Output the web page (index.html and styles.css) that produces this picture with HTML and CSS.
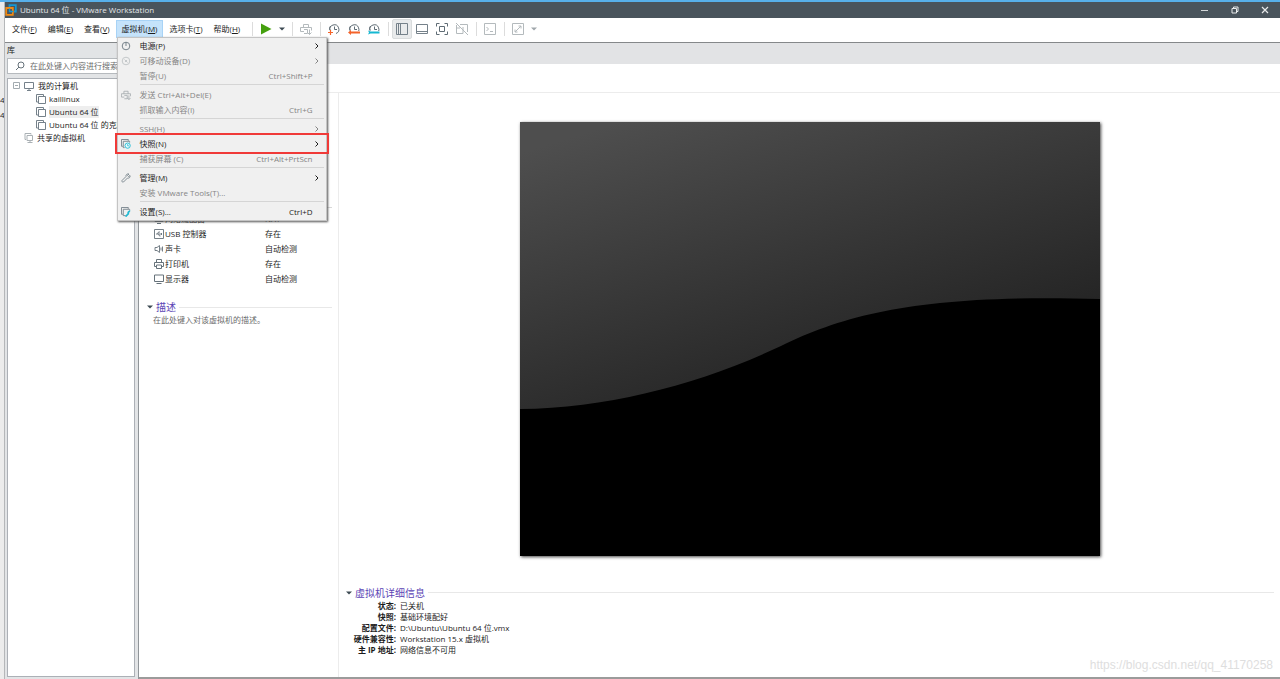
FILE: index.html
```html
<!DOCTYPE html>
<html lang="zh-CN">
<head>
<meta charset="utf-8">
<title>Ubuntu 64 位 - VMware Workstation</title>
<link rel="stylesheet" href="styles.css">
</head>
<body>
<svg class="defs" aria-hidden="true">
  <symbol id="vm" viewBox="0 0 10 10"><path d="M2.500 8H.5V.5H7.500V2.500M2.500 2.500h7v7h-7z" fill="none" stroke="#75818a"/></symbol>
  <symbol id="arrow" viewBox="0 0 6 8"><path d="M1.500 1.500 4 4 1.500 6.500" fill="none" stroke="currentColor"/></symbol>
  <symbol id="caret" viewBox="0 0 6 4"><path d="M0 .5h6L3 3.500z" fill="currentColor"/></symbol>
  <symbol id="send" viewBox="0 0 12 12"><path d="M3.500 4.500V1.500h5v3M4 8.500H.5v-4h11v3M4 6.500h3.500v4H4M9.500 6.500v5M7.500 9.500l2 2 2-2" fill="none" stroke="currentColor"/></symbol>
  <symbol id="clock" viewBox="0 0 12 12"><path d="M2 7.500A4.500 4.500 0 1 1 8 10.500M2 7.500A4.500 4.500 0 0 1 2.500 3M6.500 3.500V6.500H9" fill="none" stroke="#5f6c75"/></symbol>
</svg>
<div class="desktop">
  <aside class="behind" aria-hidden="true"><span>4</span><span>4</span></aside>
  <div class="window">
    <header class="titlebar">
      <svg class="logo" viewBox="0 0 12 12"><path d="M4.500 3V1.200h6.300v6.300H9" fill="none" stroke="#1598d4" stroke-width="1.800"/><path d="M1.200 4h6.600v6.800H1.200z" fill="none" stroke="#f08a13" stroke-width="1.800"/><path d="M4.500 4.500V7.500H8" fill="none" stroke="#1598d4" stroke-width="1.400"/></svg>
      <h1>Ubuntu 64 位 - VMware Workstation</h1>
      <div class="controls">
        <button aria-label="最小化"><svg viewBox="0 0 8 8"><path d="M0 4.500h7" stroke="#d4d8da"/></svg></button>
        <button aria-label="还原"><svg viewBox="0 0 8 8"><path d="M1 2.500h4.500V7H1zM2.500 2.500V1H7v4.500H5.500" fill="none" stroke="#e8eaeb"/></svg></button>
        <button aria-label="关闭"><svg viewBox="0 0 8 8"><path d="M1 1l6 6M7 1 1 7" stroke="#e8eaeb" stroke-width="1.200"/></svg></button>
      </div>
    </header>
    <nav class="menubar">
      <button class="item">文件(<u>F</u>)</button>
      <button class="item">编辑(<u>E</u>)</button>
      <button class="item">查看(<u>V</u>)</button>
      <div class="anchor">
        <button class="item open">虚拟机(<u>M</u>)</button>
        <div class="menu">
          <button><svg viewBox="0 0 10 10"><circle cx="5" cy="5" r="3.800" fill="none" stroke="#77838b"/><path d="M5 1v4" stroke="#77838b"/></svg><span>电源(P)</span><svg class="arr"><use href="#arrow"/></svg></button>
          <button disabled><svg viewBox="0 0 10 10"><circle cx="5" cy="5" r="3.800" fill="none" stroke="#c4c8ca"/><path d="M3.500 3.500l3 3M4 6l2-2" stroke="#c4c8ca"/></svg><span>可移动设备(D)</span><svg class="arr"><use href="#arrow"/></svg></button>
          <button disabled><i></i><span>暂停(U)</span><kbd>Ctrl+Shift+P</kbd></button>
          <hr>
          <button disabled><svg class="pale"><use href="#send"/></svg><span>发送 Ctrl+Alt+Del(E)</span></button>
          <button disabled><i></i><span>抓取输入内容(I)</span><kbd>Ctrl+G</kbd></button>
          <hr>
          <button disabled><i></i><span>SSH(H)</span><svg class="arr"><use href="#arrow"/></svg></button>
          <button class="marked"><svg viewBox="0 0 11 11"><path d="M2 8H.5V.5H8V2M4 9.500H2.500v-7h7V4" fill="none" stroke="#75818a"/><circle cx="7.300" cy="7.300" r="2.900" fill="#e6fafd" stroke="#22b9d3"/><path d="M7.300 5.500v2H9" fill="none" stroke="#22b9d3" stroke-width=".8"/></svg><span>快照(N)</span><svg class="arr"><use href="#arrow"/></svg></button>
          <button disabled><i></i><span>捕获屏幕 (C)</span><kbd>Ctrl+Alt+PrtScn</kbd></button>
          <hr>
          <button><svg viewBox="0 0 10 10"><path d="M1 7.500 5 3.500C4.500 1.500 6.500.5 8 1L6.500 2.500l1 1L9 2.500C9.500 4.500 8 5.500 6.500 5L2.500 9C1.500 9.500.5 8.500 1 7.500z" fill="none" stroke="#77838b" stroke-width=".9"/></svg><span>管理(M)</span><svg class="arr"><use href="#arrow"/></svg></button>
          <button disabled><i></i><span>安装 VMware Tools(T)...</span></button>
          <hr>
          <button><svg viewBox="0 0 11 11"><path d="M2 8H.5V.5H8V2M5 9.500H2.500v-7h7V4" fill="none" stroke="#75818a"/><path d="M5 10.500 8 7.500c-.5-2 1-3 2-2.500" fill="none" stroke="#22b9d3" stroke-width="2"/></svg><span>设置(S)...</span><kbd>Ctrl+D</kbd></button>
        </div>
      </div>
      <button class="item">选项卡(<u>T</u>)</button>
      <button class="item">帮助(<u>H</u>)</button>
      <div class="tools">
        <span class="sep"></span>
        <button aria-label="启动"><svg viewBox="0 0 12 12"><path d="M1 .5 11.500 6 1 11.500z" fill="#45a00f"/></svg></button>
        <button class="drop" aria-label="电源选项"><svg class="car"><use href="#caret"/></svg></button>
        <span class="sep"></span>
        <button class="pale" aria-label="发送按键"><svg><use href="#send"/></svg></button>
        <span class="sep"></span>
        <button aria-label="拍摄快照"><svg viewBox="0 0 12 12"><use href="#clock"/><path d="M0 9.500h5M2.500 7v5" stroke="#fff" stroke-width="2.500"/><path d="M0 9.500h5M2.500 7v5" stroke="#f4632a" stroke-width="1.200"/></svg></button>
        <button aria-label="恢复快照"><svg viewBox="0 0 12 12"><use href="#clock"/><path d="M0 8h12v4H0z" fill="#fff"/><path d="M0 9.500 3 7v1.500h9v2H3V12z" fill="#f4632a"/></svg></button>
        <button aria-label="管理快照"><svg viewBox="0 0 12 12"><use href="#clock"/><path d="M0 8h12v4H0z" fill="#fff"/><path d="M0 7.500 2.500 8.500h9v2h-9L0 11.500l1-2z" fill="#15b8d2"/></svg></button>
        <span class="sep"></span>
        <button class="on" aria-label="显示库"><svg viewBox="0 0 12 12"><path d="M.5.5h11v11H.5zM4.500.5v11M2.500.5v11" fill="none" stroke="#75818a"/></svg></button>
        <button aria-label="缩略图栏"><svg viewBox="0 0 12 12"><path d="M.5 1.500h11v9H.5zM.5 8.500h11" fill="none" stroke="#75818a"/></svg></button>
        <button aria-label="全屏"><svg viewBox="0 0 12 12"><path d="M.5 3.500v-3h3M8.500.5h3v3M11.500 8.500v3h-3M3.500 11.500h-3v-3M3.500 3.500h5v5h-5z" fill="none" stroke="#5f6c75"/></svg></button>
        <button class="pale" aria-label="Unity"><svg viewBox="0 0 12 12"><path d="M4 1.500h7.500V9M7 4v6.500H.5V2M.5 5H4M0 0l12 12" fill="none" stroke="currentColor"/></svg></button>
        <span class="sep"></span>
        <button class="pale" aria-label="控制台"><svg viewBox="0 0 12 12"><path d="M.5.5h11v11H.5zM2.500 4l2 2-2 2M6 8.500h3" fill="none" stroke="currentColor"/></svg></button>
        <span class="sep"></span>
        <button class="pale" aria-label="自由拉伸"><svg viewBox="0 0 12 12"><path d="M.5.5h11v11H.5zM3 9l6-6M6.500 3H9v2.500M3 6.500V9h2.500" fill="none" stroke="currentColor"/></svg></button>
        <button class="drop pale" aria-label="拉伸选项"><svg class="car"><use href="#caret"/></svg></button>
      </div>
    </nav>
    <div class="content">
      <aside class="library">
        <h2>库</h2>
        <label class="search"><svg viewBox="0 0 10 10"><circle cx="6" cy="4" r="3" fill="none" stroke="#66727a"/><path d="M4 6 1 9" stroke="#66727a"/></svg><input type="text" aria-label="搜索" placeholder="在此处键入内容进行搜索"></label>
        <ul class="tree">
          <li class="root"><svg class="box" viewBox="0 0 7 7"><path d="M.5.5h6v6h-6zM2 3.500h3" fill="none" stroke="#a3abb0"/></svg><svg viewBox="0 0 10 10"><path d="M.5 1.500h9v6h-9zM3 9.500h4M5 7.500v2" fill="none" stroke="#75818a"/></svg><span>我的计算机</span></li>
          <li><svg><use href="#vm"/></svg><span>kaillinux</span></li>
          <li><svg><use href="#vm"/></svg><span class="sel">Ubuntu 64 位</span></li>
          <li><svg><use href="#vm"/></svg><span>Ubuntu 64 位 的克隆</span></li>
          <li class="shared"><svg viewBox="0 0 10 10"><path d="M2 6.500H1v-6h6v1M3 2.500h5.500v5H3zM6 7.500v2M3.500 9.500h5" fill="none" stroke="#aab1b5"/></svg><span>共享的虚拟机</span></li>
        </ul>
      </aside>
      <main class="main">
        <div class="tabs"></div>
        <div class="heading"></div>
        <div class="columns">
          <section class="left">
            <hr class="cut">
            <dl class="devices">
              <dt><svg viewBox="0 0 10 10"><path d="M1 1.500h8v6H1zM3 9.500h4" fill="none" stroke="#66727a"/></svg>网络适配器</dt><dd>NAT</dd>
              <dt><svg viewBox="0 0 10 10"><path d="M.5.5h9v9h-9zM2 5h6M3.500 5l1-2h1.500M4.500 5l1 2h1M7 4l1 1-1 1" fill="none" stroke="#66727a" stroke-width=".9"/></svg>USB 控制器</dt><dd>存在</dd>
              <dt><svg viewBox="0 0 10 10"><path d="M1 3.500h2L5.500 1.500v7L3 6.500H1zM7 3.500v3M8.500 2.500v5" fill="none" stroke="#66727a" stroke-width=".9"/></svg>声卡</dt><dd>自动检测</dd>
              <dt><svg viewBox="0 0 10 10"><path d="M2.500 3.500v-3h5v3M2.500 7.500h-2v-4h9v4h-2M2.500 6h5v3.500h-5z" fill="none" stroke="#66727a"/></svg>打印机</dt><dd>存在</dd>
              <dt><svg viewBox="0 0 10 10"><path d="M.5 1h9v6.500h-9zM2.500 9.500h5" fill="none" stroke="#66727a"/></svg>显示器</dt><dd>自动检测</dd>
            </dl>
            <h3><svg class="car"><use href="#caret"/></svg><span>描述</span></h3>
            <p class="hint">在此处键入对该虚拟机的描述。</p>
          </section>
          <section class="right">
            <svg class="preview" viewBox="0 0 581 434" role="img" aria-label="虚拟机画面">
              <defs><linearGradient id="shine" gradientUnits="userSpaceOnUse" x1="100" y1="0" x2="200" y2="320"><stop offset="0" stop-color="#4e4e4e"/><stop offset="1" stop-color="#222"/></linearGradient></defs>
              <path d="M0 0h581v434H0z"/>
              <path d="M0 0H581V177C410 172 330 190 261 224C180 262 90 286 0 287z" fill="url(#shine)"/>
            </svg>
            <div class="info">
              <h3><svg class="car"><use href="#caret"/></svg><span>虚拟机详细信息</span></h3>
              <dl class="details">
                <dt>状态:</dt><dd>已关机</dd>
                <dt>快照:</dt><dd>基础环境配好</dd>
                <dt>配置文件:</dt><dd>D:\Ubuntu\Ubuntu 64 位.vmx</dd>
                <dt>硬件兼容性:</dt><dd>Workstation 15.x 虚拟机</dd>
                <dt>主 IP 地址:</dt><dd>网络信息不可用</dd>
              </dl>
            </div>
          </section>
        </div>
      </main>
    </div>
  </div>
  <div class="watermark">https://blog.csdn.net/qq_41170258</div>
</div>
</body>
</html>
```

FILE: styles.css
```css
* { box-sizing: border-box; }
body { margin: 0; font: 8px/12px "Open Sans", "Noto Sans CJK SC", sans-serif; color: #1c1c1c; }
h1, h2, h3, p, ul, dl, dd { margin: 0; padding: 0; font-size: 8px; font-weight: 400; }
button, input, kbd { font: inherit; color: inherit; }
button { border: 0; padding: 0; background: none; white-space: nowrap; }
svg { width: 10px; height: 10px; flex: none; }
.defs { position: absolute; width: 0; height: 0; }
.car { width: 6px; height: 4px; color: #3d4a53; }

.desktop { position: relative; display: flex; min-height: 100vh; overflow: hidden; border-top: 2px solid #57b0ea; }
.behind { width: 5px; flex: none; display: flex; flex-direction: column; gap: 3px; padding-top: 92px; overflow: hidden; background: #ececec; border-right: 1px solid #b5b7b9; }
.window { flex: 1; min-width: 0; display: flex; flex-direction: column; }

.titlebar { display: flex; align-items: center; gap: 3px; height: 16px; background: #49545c; color: #e4e7e9; }
.logo { width: 12px; height: 12px; }
.titlebar h1 { flex: 1; }
.controls { display: flex; }
.controls button { width: 30px; height: 14px; display: grid; place-items: center; }
.controls svg { width: 8px; height: 8px; }

.menubar { display: flex; align-items: center; gap: 1px; height: 25px; padding: 0 0 2px 2px; background: #fff; border-bottom: 1px solid #85888a; }
.item { height: 18px; padding: 0 5px; }
.open { background: #c5e3fb; border: 1px solid #a8d3f6; }
.anchor { position: relative; display: flex; }
.menu { position: absolute; z-index: 2; top: 17px; left: 1px; width: 210px; padding-bottom: 1px; background: #f0f0f0; border: 1px solid #c4c4c4; box-shadow: 1px 1px 2px #555; }
.menu button { display: flex; align-items: center; gap: 9px; width: 100%; height: 15px; padding: 0 13px 0 3px; }
.menu button > i { width: 10px; }
.menu button > svg:first-child { color: #a5abae; }
.menu span { flex: 1; text-align: left; }
.menu button:disabled { color: #858585; }
.menu .arr { width: 6px; height: 8px; margin-right: -7px; }
.menu hr { height: 1px; margin: 1px 2px 2px 22px; border: 0; background: #d5d5d5; }
.menu .marked { position: relative; outline: 2px solid #f03a38; outline-offset: 1px; }

.tools { display: flex; align-items: center; padding-left: 2px; color: #5f6c75; }
.tools button { display: grid; place-items: center; width: 20px; height: 20px; }
.tools button svg { width: 12px; height: 12px; }
.tools .drop { width: 12px; }
.tools .drop svg { width: 6px; height: 4px; }
.tools .pale { color: #b4babd; }
.tools .on { background: #e9ebec; border: 1px solid #d9dcdd; border-radius: 2px; }
.tools .pale .car { color: #a0a7ab; }
.sep { width: 1px; height: 14px; margin: 0 3px 0 4px; background: #dcdcdc; }

.content { flex: 1; display: flex; }
.library { width: 134px; flex: none; display: flex; flex-direction: column; padding: 0 3px 2px 2px; background: #e2e4e6; border-right: 1px solid #909599; }
.library h2 { height: 15px; line-height: 14px; }
.search { display: flex; align-items: center; gap: 5px; height: 16px; padding-left: 7px; background: #fff; border: 1px solid #b6babe; }
.search input { flex: 1; min-width: 0; padding: 0; border: 0; outline: 0; background: none; }
.search input::placeholder { color: #6c6c6c; opacity: 1; }
.tree { flex: 1; margin-top: 4px; list-style: none; background: #fff; border: 1px solid #acb0b6; overflow: hidden; }
.tree li { display: flex; align-items: center; gap: 3px; height: 13px; padding-left: 28px; white-space: nowrap; }
.tree .root { padding-left: 5px; gap: 4px; }
.tree .shared { padding-left: 16px; }
.tree .box { width: 7px; height: 7px; }
.sel { background: #eee; }

.main { flex: 1; min-width: 0; display: flex; flex-direction: column; background: #fff; border-bottom: 2px solid #9b9b9b; }
.tabs { height: 21px; background: #e2e3e5; }
.heading { height: 29px; border-bottom: 1px solid #ececec; }
.columns { flex: 1; display: flex; }
.left { width: 200px; flex: none; padding: 114px 6px 0 8px; border-right: 1px solid #ececec; }
.cut { height: 1px; margin: 0 0 3px; border: 0; background: #d8d8d8; }
.devices { display: grid; grid-template-columns: 111px 1fr; grid-auto-rows: 15px; padding-left: 7px; align-items: center; }
.devices dt { display: flex; align-items: center; gap: 1px; }
.left h3 { margin-top: 14px; }
h3 { display: flex; align-items: center; gap: 3px; }
h3 span { font-size: 10px; line-height: 14px; color: #5b45b5; }
h3::after { content: ""; flex: 1; height: 1px; background: #e8e8e8; }
.hint { padding-left: 6px; color: #6b6b6b; }
.right { flex: 1; min-width: 0; display: flex; flex-direction: column; padding: 29px 6px 0 7px; }
.preview { width: 62.6%; height: auto; aspect-ratio: 581 / 434; align-self: center; box-shadow: 1px 1px 3px #444; }
.info { margin-top: 30px; }
.details { display: grid; grid-template-columns: 50px 1fr; column-gap: 4px; line-height: 11px; }
.details dt { text-align: right; font-weight: 700; white-space: nowrap; }
.watermark { position: absolute; right: 7px; bottom: 7px; font: 12px/14px "Liberation Sans", sans-serif; color: #dedede; }
```
